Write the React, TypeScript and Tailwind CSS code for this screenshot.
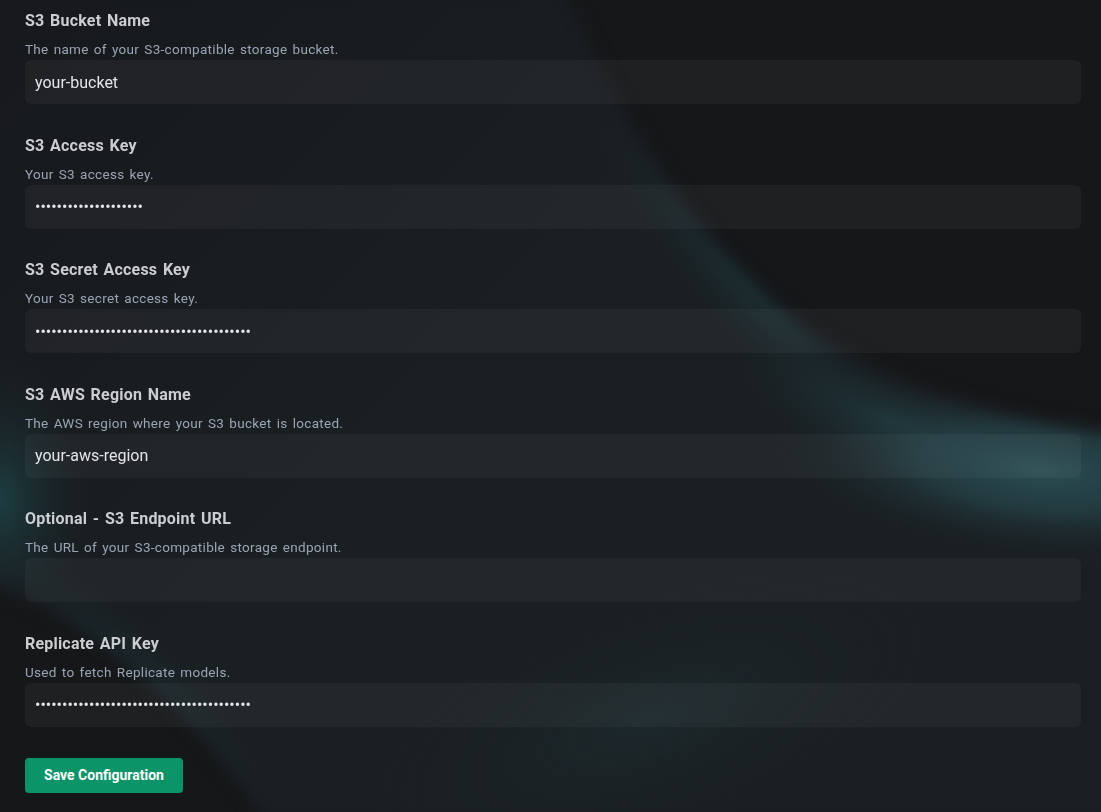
import React from "react";

type Field = {
  label: string;
  hint: string;
  value: string;
  secret?: boolean;
};

const fields: Field[] = [
  { label: "S3 Bucket Name", hint: "The name of your S3-compatible storage bucket.", value: "your-bucket" },
  { label: "S3 Access Key", hint: "Your S3 access key.", value: "x".repeat(20), secret: true },
  { label: "S3 Secret Access Key", hint: "Your S3 secret access key.", value: "x".repeat(40), secret: true },
  { label: "S3 AWS Region Name", hint: "The AWS region where your S3 bucket is located.", value: "your-aws-region" },
  { label: "Optional - S3 Endpoint URL", hint: "The URL of your S3-compatible storage endpoint.", value: "" },
  { label: "Replicate API Key", hint: "Used to fetch Replicate models.", value: "x".repeat(40), secret: true },
];

// background aurora, drawn once behind the form
function Glow() {
  const band =
    "M565 -10 C615 110 690 230 770 300 C850 365 950 412 1115 432 L1115 825 L268 825 C200 720 110 625 -15 582 L-15 -10 Z";
  return (
    <svg className="pointer-events-none fixed inset-0 h-full w-full" viewBox="0 0 1101 812" preserveAspectRatio="none">
      <defs>
        <filter id="edge" x="-10%" y="-10%" width="120%" height="120%" colorInterpolationFilters="sRGB">
          <feGaussianBlur stdDeviation="8" />
        </filter>
        <mask id="bandMask" maskUnits="userSpaceOnUse" x="-50" y="-50" width="1200" height="920">
          <path d={band} fill="#fff" filter="url(#edge)" />
        </mask>
        <linearGradient id="shade" gradientUnits="userSpaceOnUse" x1="0" y1="0" x2="420" y2="420">
          <stop offset="0" stopColor="#16181b" stopOpacity="0.85" />
          <stop offset="1" stopColor="#16181b" stopOpacity="0" />
        </linearGradient>
        <radialGradient id="tealHi">
          <stop offset="0" stopColor="#2a4d52" stopOpacity="1" />
          <stop offset="0.45" stopColor="#25444a" stopOpacity="0.7" />
          <stop offset="1" stopColor="#1a2023" stopOpacity="0" />
        </radialGradient>
        <radialGradient id="tealMid">
          <stop offset="0" stopColor="#1e383c" stopOpacity="1" />
          <stop offset="1" stopColor="#1a2023" stopOpacity="0" />
        </radialGradient>
        <radialGradient id="tealLeft">
          <stop offset="0" stopColor="#1d3e42" stopOpacity="1" />
          <stop offset="1" stopColor="#1a2023" stopOpacity="0" />
        </radialGradient>
      </defs>
      <g mask="url(#bandMask)">
        <rect x="-20" y="-20" width="1140" height="860" fill="#1a1f22" />
        <rect x="-20" y="-20" width="1140" height="860" fill="url(#shade)" />
        <ellipse cx="750" cy="280" rx="240" ry="60" transform="rotate(50 750 280)" fill="url(#tealMid)" opacity="0.8" />
        <ellipse cx="890" cy="420" rx="180" ry="55" transform="rotate(20 890 420)" fill="url(#tealMid)" />
        <ellipse cx="1040" cy="470" rx="270" ry="90" transform="rotate(6 1040 470)" fill="url(#tealHi)" />
        <ellipse cx="0" cy="500" rx="95" ry="150" fill="url(#tealLeft)" />
        <ellipse cx="140" cy="690" rx="200" ry="55" transform="rotate(45 140 690)" fill="url(#tealMid)" opacity="0.8" />
        <ellipse cx="650" cy="720" rx="300" ry="120" transform="rotate(-20 650 720)" fill="url(#tealMid)" opacity="0.35" />
      </g>
    </svg>
  );
}

function FormField({ f }: { f: Field }) {
  return (
    <div className="flex flex-col">
      <label className="text-[16px] leading-6 font-bold text-[#cbcdd1] tracking-[0.2px] [word-spacing:1.5px]">{f.label}</label>
      <p className="mt-1.5 text-[13.5px] leading-5 text-[#9aa4b4] tracking-[0.3px] [word-spacing:1.5px]">{f.hint}</p>
      <input
        type={f.secret ? "password" : "text"}
        defaultValue={f.value}
        readOnly
        className="mt-px h-11 w-full rounded-md bg-white/[0.04] px-2.5 text-[16px] text-[#e3e5e8] outline-none"
      />
    </div>
  );
}

export default function App() {
  return (
    <div className="relative min-h-[812px] bg-[#161719]" style={{ fontFamily: "Roboto, 'Noto Sans', sans-serif" }}>
      <Glow />
      <div className="relative flex flex-col gap-[29.6px] pl-[25px] pr-5 pt-[9px]">
        {fields.map((f) => (
          <FormField key={f.label} f={f} />
        ))}
        <div className="pt-px">
          <button className="h-[35px] w-[158px] rounded bg-[#0b9468] text-[14px] font-bold text-white">
            Save Configuration
          </button>
        </div>
      </div>
    </div>
  );
}
